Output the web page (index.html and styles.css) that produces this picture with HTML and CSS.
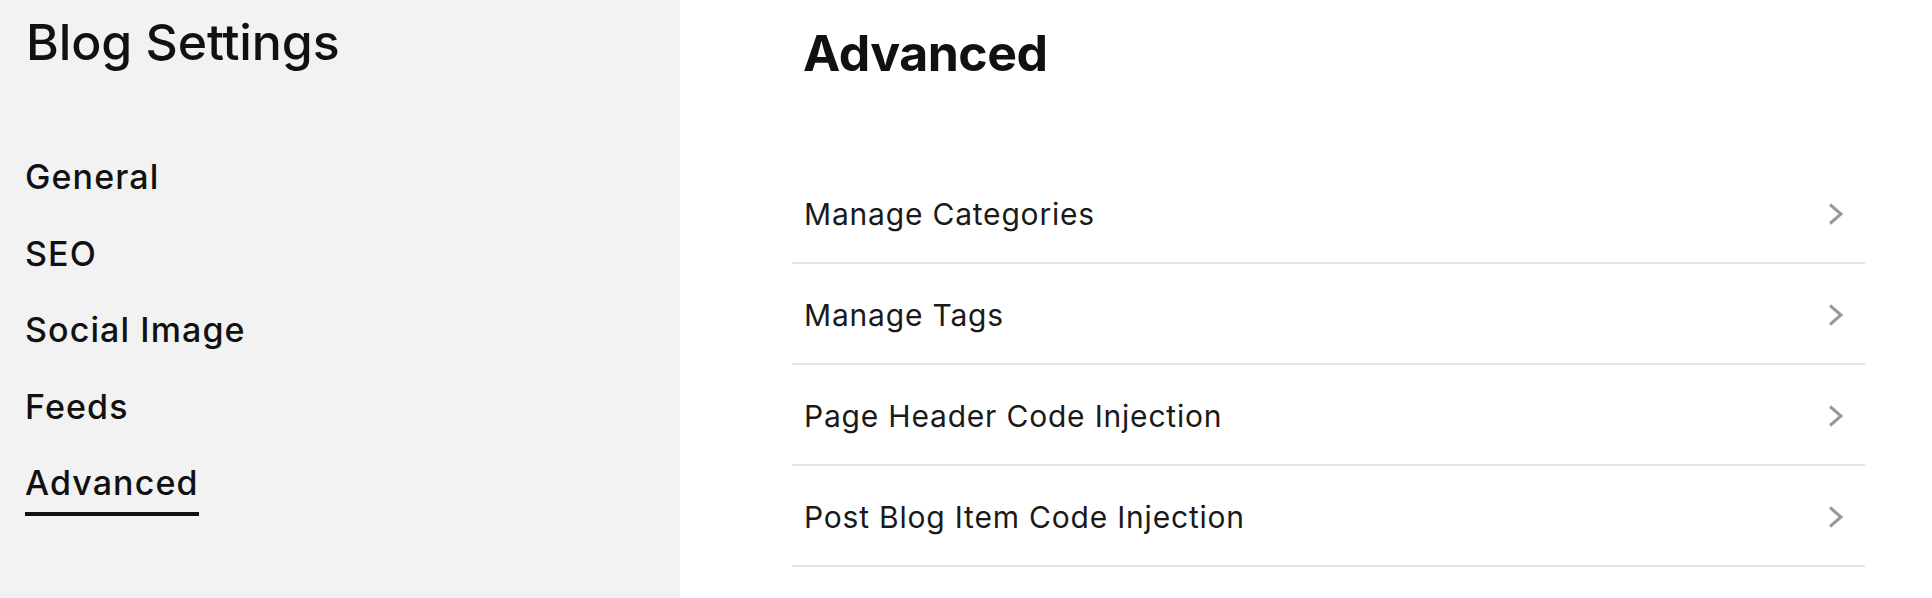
FILE: index.html
```html
<!DOCTYPE html>
<html lang="en">
<head>
    <meta charset="UTF-8">
    <meta name="viewport" content="width=device-width, initial-scale=1.0">
    <title>Blog Settings</title>
    <link rel="stylesheet" href="styles.css">
</head>
<body>
    <div class="sidebar">
        <h1>Blog Settings</h1>
        <nav class="nav">
            <a href="#">General</a>
            <a href="#">SEO</a>
            <a href="#">Social Image</a>
            <a href="#">Feeds</a>
            <a href="#" class="active">Advanced</a>
        </nav>
    </div>

    <div class="main">
        <h2>Advanced</h2>
        <ul class="settings-list">
            <li>
                <span>Manage Categories</span>
                <svg class="chevron" viewBox="0 0 18 24"><polyline points="3,2.5 14,12 3,21.5"/></svg>
            </li>
            <li>
                <span>Manage Tags</span>
                <svg class="chevron" viewBox="0 0 18 24"><polyline points="3,2.5 14,12 3,21.5"/></svg>
            </li>
            <li>
                <span>Page Header Code Injection</span>
                <svg class="chevron" viewBox="0 0 18 24"><polyline points="3,2.5 14,12 3,21.5"/></svg>
            </li>
            <li>
                <span>Post Blog Item Code Injection</span>
                <svg class="chevron" viewBox="0 0 18 24"><polyline points="3,2.5 14,12 3,21.5"/></svg>
            </li>
        </ul>
    </div>
</body>
</html>
```

FILE: styles.css
```css
body {
    font-family: Inter, "Liberation Sans", sans-serif;
    color: #111;
    background-color: #fff;
    display: flex;
    height: 100vh;
    margin: 0;
    overflow: hidden;
}
.sidebar {
    width: 680px;
    flex-shrink: 0;
    background: #f2f2f2;
    padding: 12px 0 0 25px;
    box-sizing: border-box;
}
.sidebar h1 {
    margin: 0 0 0 1px;
    font-size: 50px;
    font-weight: 500;
    line-height: 60px;
    letter-spacing: -0.1px;
}
.nav {
    display: flex;
    flex-direction: column;
    align-items: flex-start;
    gap: 36.5px;
    margin-top: 85px;
}
.nav a {
    color: #111;
    text-decoration: none;
    font-size: 34px;
    font-weight: 500;
    line-height: 40px;
    letter-spacing: 1.1px;
}
.nav a.active {
    padding-bottom: 9px;
    border-bottom: 4px solid #111;
}
.main {
    flex: 1;
    padding: 23px 67px 0 112px;
}
.main h2 {
    margin: 0 0 0 11px;
    font-size: 50px;
    font-weight: 700;
    line-height: 60px;
    letter-spacing: -0.5px;
}
.settings-list {
    list-style: none;
    margin: 80px 0 0;
    padding: 0;
}
.settings-list li {
    display: flex;
    align-items: center;
    justify-content: space-between;
    height: 96px;
    padding: 3px 20px 0 12px;
    border-bottom: 2px solid #e4e4e4;
    font-size: 30px;
    letter-spacing: 0.8px;
    color: #1a1a1a;
}
.chevron {
    width: 18px;
    height: 24px;
    fill: none;
    stroke: #999;
    stroke-width: 3;
}
```
